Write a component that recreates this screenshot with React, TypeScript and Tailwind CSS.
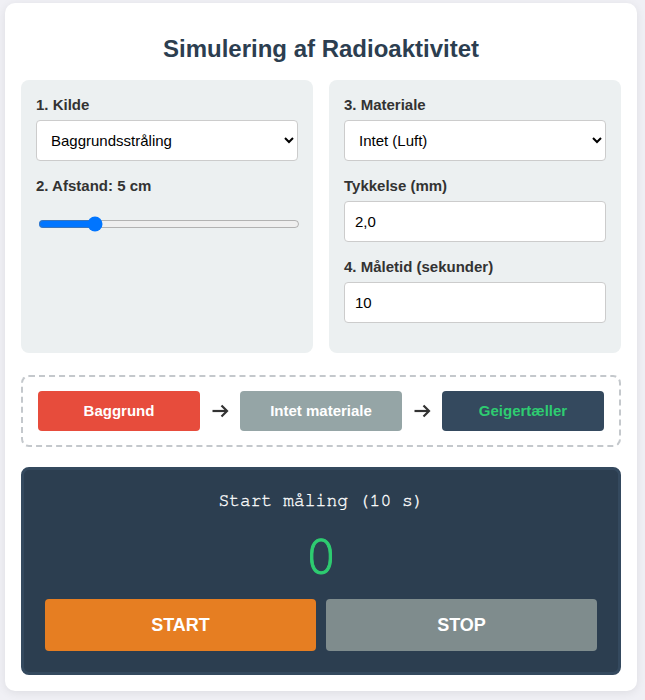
import React, { useState } from "react";

const sans = { fontFamily: '"Liberation Sans", Arial, sans-serif' };
const mono = {
  fontFamily:
    '"Nimbus Mono PS", "Nimbus Mono L", FreeMono, "Liberation Mono", "Courier New", monospace',
};

function Label({ children }: { children: React.ReactNode }) {
  return (
    <label className="block text-[15px] leading-[19px] font-bold text-[#333] mb-[6px]">
      {children}
    </label>
  );
}

const fieldCls =
  "block w-full h-[41px] px-[10px] bg-white border border-[#ccc] rounded-[4px] text-[15px] text-black mb-[15px]";

function Arrow() {
  return (
    <div className="flex-1 flex justify-center">
      <svg width="17" height="14" viewBox="0 0 17 14" fill="none" aria-label="→">
        <path d="M0.5 7H15" stroke="#333" strokeWidth="2.2" />
        <path d="M9.5 1.5L15 7L9.5 12.5" stroke="#333" strokeWidth="2.2" />
      </svg>
    </div>
  );
}

export default function App() {
  const [distance, setDistance] = useState(5);
  const [thickness, setThickness] = useState("2,0");
  const [seconds, setSeconds] = useState("10");

  return (
    <div className="min-h-[700px] bg-[#f0f0f5] pt-[3px]" style={sans}>
      <div className="ml-[5px] w-[632px] bg-white rounded-[10px] shadow-[0_2px_10px_rgba(0,0,0,0.08)] px-4 pb-4">
        <h2 className="pt-[34px] pb-[19px] text-center text-[24px] leading-[24px] font-bold text-[#2c3e50]">
          Simulering af Radioaktivitet
        </h2>

        <div className="grid grid-cols-2 gap-4">
          <div className="bg-[#ecf0f1] rounded-lg p-[15px]">
            <Label>1. Kilde</Label>
            <select className={fieldCls} defaultValue="bg">
              <option value="bg">Baggrundsstråling</option>
              <option value="a">Alfa-kilde</option>
              <option value="b">Beta-kilde</option>
              <option value="g">Gamma-kilde</option>
            </select>
            <Label>2. Afstand: {distance} cm</Label>
            <input
              type="range"
              min={0}
              max={25}
              value={distance}
              onChange={(e) => setDistance(Number(e.target.value))}
              className="block w-full m-[2px] mt-[21px] accent-[#0075ff]"
            />
          </div>

          <div className="bg-[#ecf0f1] rounded-lg p-[15px]">
            <Label>3. Materiale</Label>
            <select className={fieldCls} defaultValue="air">
              <option value="air">Intet (Luft)</option>
              <option value="paper">Papir</option>
              <option value="al">Aluminium</option>
              <option value="pb">Bly</option>
            </select>
            <Label>Tykkelse (mm)</Label>
            <input
              type="text"
              value={thickness}
              onChange={(e) => setThickness(e.target.value)}
              className={fieldCls}
            />
            <Label>4. Måletid (sekunder)</Label>
            <input
              type="text"
              value={seconds}
              onChange={(e) => setSeconds(e.target.value)}
              className={`${fieldCls} mb-0`}
            />
          </div>
        </div>

        <div className="mt-[22px] border-2 border-dashed border-[#c4c8cc] rounded-lg px-[15px] py-[14px] flex items-center">
          <div className="w-[162px] h-10 rounded-[4px] bg-[#e74c3c] text-white font-bold text-[15px] flex items-center justify-center">
            Baggrund
          </div>
          <Arrow />
          <div className="w-[162px] h-10 rounded-[4px] bg-[#95a5a6] text-white font-bold text-[15px] flex items-center justify-center">
            Intet materiale
          </div>
          <Arrow />
          <div className="w-[162px] h-10 rounded-[4px] bg-[#34495e] text-[#2ecc71] font-bold text-[15px] flex items-center justify-center">
            Geigertæller
          </div>
        </div>

        <div className="mt-[20px] bg-[#2c3e50] border-[3px] border-[#34495e] rounded-lg px-[21px] pt-[22px] pb-[21px]">
          <div
            className="text-center text-[18px] leading-[18px] text-white [-webkit-text-stroke:0.3px_#ffffff]"
            style={mono}
          >
            Start måling ({seconds} s)
          </div>
          <div
            className="mt-[10px] mb-[7px] text-center text-[56px] leading-[72px] text-[#2ecc71] [-webkit-text-stroke:1px_#2ecc71]"
            style={mono}
          >
            0
          </div>
          <div className="grid grid-cols-2 gap-[10px]">
            <button className="h-[52px] rounded-[4px] bg-[#e67e22] text-white font-bold text-[18px]">
              START
            </button>
            <button className="h-[52px] rounded-[4px] bg-[#7f8c8d] text-white font-bold text-[18px]">
              STOP
            </button>
          </div>
        </div>
      </div>
    </div>
  );
}
